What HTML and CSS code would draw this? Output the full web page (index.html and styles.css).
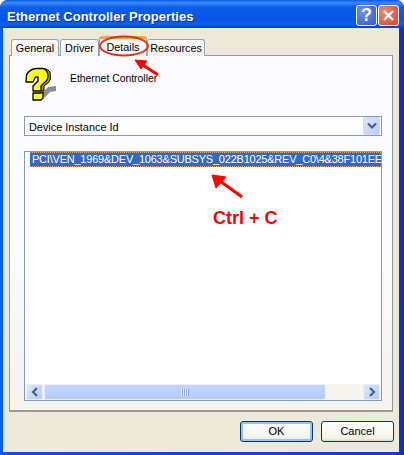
FILE: index.html
```html
<!DOCTYPE html>
<html lang="en">
<head>
    <meta charset="UTF-8">
    <title>Ethernet Controller Properties</title>
    <link rel="stylesheet" href="styles.css">
</head>
<body>
    <div class="window">
        <div class="titlebar">
            <span class="title">Ethernet Controller Properties</span>
            <div class="caption-btn help">?</div>
            <div class="caption-btn close">
                <svg width="13" height="13" viewBox="0 0 13 13"><path d="M2 2 L11 11 M11 2 L2 11" stroke="#fff" stroke-width="2.4" fill="none"/></svg>
            </div>
        </div>

        <div class="client">
            <div class="tabs">
                <div class="tab tab-general">General</div>
                <div class="tab tab-driver">Driver</div>
                <div class="tab tab-details">Details</div>
                <div class="tab tab-resources">Resources</div>
            </div>

            <div class="panel">
                <div class="device">
                    <svg class="device-icon" width="32" height="34" viewBox="0 0 32 34">
                        <path d="M17 27 L23 20 L31 19 L31 24 L25 25 L19 31 Z" fill="#8c8c8c"/>
                        <path d="M18 1.5 Q23 1.5 25 5 L25.5 12 Q24 16 19 19 L19 24 L16 24 L16 19 Z" fill="#a8a510" stroke="#000" stroke-width="1"/>
                        <path d="M1 15 L1.5 8 Q4 2.5 11 1.5 L18 1.5 Q23 3 23 9 Q23 13 19 16 L16 19 L16 24 L8 24 L8 19 L13 14 L13 10 L10.5 10 L8 15 Z" fill="#ffff14" stroke="#000" stroke-width="1.3" stroke-linejoin="round"/>
                        <path d="M8 26 L16 26 L18 25 L18 31 L16 33 L8 33 Z" fill="#ffff14" stroke="#000" stroke-width="1.3" stroke-linejoin="round"/>
                    </svg>
                    <span class="device-name">Ethernet Controller</span>
                </div>

                <div class="combo">
                    <span class="combo-text">Device Instance Id</span>
                    <div class="combo-btn">
                        <svg width="10" height="8" viewBox="0 0 10 8"><path d="M1 1.5 L5 5.5 L9 1.5" stroke="#4d6185" stroke-width="2.2" fill="none"/></svg>
                    </div>
                </div>

                <div class="listbox">
                    <div class="list-body">
                        <div class="list-row">PCI\VEN_1969&amp;DEV_1063&amp;SUBSYS_022B1025&amp;REV_C0\4&amp;38F101EE</div>
                    </div>
                    <div class="scrollbar">
                        <div class="scroll-btn">
                            <svg width="8" height="10" viewBox="0 0 8 10"><path d="M6 1 L2 5 L6 9" stroke="#4d6185" stroke-width="2.2" fill="none"/></svg>
                        </div>
                        <div class="scroll-thumb">
                            <span class="grip"></span>
                        </div>
                        <div class="scroll-track"></div>
                        <div class="scroll-btn">
                            <svg width="8" height="10" viewBox="0 0 8 10"><path d="M2 1 L6 5 L2 9" stroke="#4d6185" stroke-width="2.2" fill="none"/></svg>
                        </div>
                    </div>
                </div>
            </div>

            <div class="buttons">
                <div class="btn btn-default">OK</div>
                <div class="btn">Cancel</div>
            </div>
        </div>

        <!-- anotacoes vermelhas por cima da janela -->
        <svg class="marks" width="404" height="455" viewBox="0 0 404 455">
            <ellipse cx="124" cy="46" rx="24" ry="9.5" fill="none" stroke="#f02a14" stroke-width="1.9"/>
            <g stroke="#ff0000" stroke-width="3" fill="#ff0000">
                <path d="M158 75 L143 65" fill="none"/>
                <path d="M135 60 L147 61 L141 69 Z" stroke-width="1"/>
                <path d="M242 197 L220 181" fill="none"/>
                <path d="M212 175 L226 177 L216 188 Z" stroke-width="1"/>
            </g>
        </svg>
        <span class="note">Ctrl + C</span>
    </div>
</body>
</html>
```

FILE: styles.css
```css
body {
    margin: 0;
    background-color: #ffffff;
    font-family: "Liberation Sans", Arial, sans-serif;
    font-size: 11px;
    color: #000000;
}

.window {
    position: relative;
    width: 404px;
    height: 455px;
    box-sizing: border-box;
    display: flex;
    flex-direction: column;
    padding: 0 5px 3px 3px;
    border-radius: 8px 8px 0 0;
    background-color: #0a3fd8;
    background-image: linear-gradient(to right, #0a5ff0, #0a50e6 2%, #0a3fd8 98%, #0a2fb0);
    overflow: hidden;
}

.titlebar {
    height: 28px;
    margin: 0 -5px 0 -3px;
    padding: 0 5px 0 7px;
    display: flex;
    align-items: center;
    flex-shrink: 0;
    background-image: linear-gradient(to bottom, #0a5ae6 0, #3a8cf8 3px, #0a5ee8 7px, #0654e4 20px, #0a62f0 24px, #0440c8 28px);
}

.title {
    flex: 1;
    color: #ffffff;
    font-weight: bold;
    font-size: 13px;
    text-shadow: 1px 1px 0 #0a2fa0;
    margin-top: 4px;
}

.caption-btn {
    width: 19px;
    height: 19px;
    border: 1px solid #ffffff;
    border-radius: 3px;
    margin-left: 1px;
    margin-top: 3px;
    display: flex;
    align-items: center;
    justify-content: center;
    color: #ffffff;
}

.help {
    background-image: radial-gradient(circle at 30% 30%, #6f8fe8, #2f58d8);
    font-weight: bold;
    font-size: 18px;
}

.close {
    background-image: radial-gradient(circle at 30% 30%, #ec8a70, #d8452a);
}

.client {
    flex: 1;
    display: flex;
    flex-direction: column;
    background-color: #ece9d8;
    padding: 8px 6px 0 6px;
    min-height: 0;
}

.tabs {
    height: 20px;
    display: flex;
    align-items: flex-end;
    padding-left: 2px;
    position: relative;
    z-index: 1;
    margin-bottom: -1px;
}

.tab {
    height: 17px;
    box-sizing: border-box;
    border: 1px solid #91a7b4;
    border-bottom: none;
    border-radius: 3px 3px 0 0;
    background-image: linear-gradient(to bottom, #ffffff, #f1f0ea);
    text-align: center;
    line-height: 16px;
    font-size: 10.8px;
    margin-right: 1px;
}

.tab-general { width: 48px; }
.tab-driver { width: 39px; }
.tab-details {
    width: 48px;
    height: 20px;
    background-image: none;
    background-color: #fcfcfe;
    border-top: 3px solid #f5a83c;
    line-height: 16px;
    margin-left: -1px;
}
.tab-resources { width: 58px; margin-left: -1px; }

.panel {
    width: 384px;
    height: 357px;
    box-sizing: border-box;
    border: 1px solid #919b9c;
    border-bottom: 2px solid #9a9a90;
    background-image: linear-gradient(to bottom, #fcfcfe, #fcfcfe 50%, #f4f3ee);
    padding: 0 10px 9px 14px;
    display: flex;
    flex-direction: column;
}

.device {
    height: 60px;
    display: flex;
    align-items: flex-start;
    flex-shrink: 0;
}

.device-icon {
    margin: 11px 0 0 1px;
}

.device-name {
    margin: 16px 0 0 13px;
    font-size: 10.4px;
    line-height: 13px;
}

.combo {
    height: 20px;
    box-sizing: border-box;
    border: 1px solid #7f9db9;
    background-color: #ffffff;
    display: flex;
    align-items: center;
    padding: 0 1px 0 4px;
    flex-shrink: 0;
    font-size: 10.9px;
}

.combo-text {
    flex: 1;
    margin-top: 1px;
}

.combo-btn {
    width: 15px;
    height: 16px;
    border: 1px solid #c8d8f8;
    border-radius: 2px;
    background-image: linear-gradient(135deg, #dde7fd, #b6ccf9);
    display: flex;
    align-items: center;
    justify-content: center;
}

.listbox {
    flex: 1;
    margin-top: 15px;
    border: 1px solid #7f9db9;
    background-color: #ffffff;
    display: flex;
    flex-direction: column;
    min-height: 0;
}

.list-body {
    flex: 1;
    padding: 0 0 0 5px;
}

.list-row {
    height: 15px;
    line-height: 15px;
    box-sizing: border-box;
    background-color: #316ac5;
    color: #ffffff;
    border-top: 1px dotted #d9b070;
    border-bottom: 1px dotted #d9b070;
    line-height: 13px;
    padding-left: 2px;
    font-size: 11px;
    letter-spacing: -0.22px;
    white-space: nowrap;
}

.scrollbar {
    height: 16px;
    display: flex;
    background-color: #f6f5f0;
}

.scroll-btn {
    width: 15px;
    height: 14px;
    margin: 0 1px;
    border: 1px solid #e8eefc;
    border-radius: 2px;
    background-image: linear-gradient(135deg, #dde7fd, #b6ccf9);
    display: flex;
    align-items: center;
    justify-content: center;
    flex-shrink: 0;
}

.scroll-thumb {
    width: 282px;
    box-sizing: border-box;
    border: 1px solid #e8eefc;
    border-radius: 2px;
    background-image: linear-gradient(to bottom, #c4d5fb, #b6cbf8);
    display: flex;
    align-items: center;
    justify-content: center;
}

.grip {
    width: 8px;
    height: 7px;
    background-image: repeating-linear-gradient(to right, #eef3fe 0, #eef3fe 1px, #8ea8dc 1px, #8ea8dc 2px);
}

.scroll-track {
    flex: 1;
}

.buttons {
    flex: 1;
    display: flex;
    justify-content: flex-end;
    align-items: flex-start;
    gap: 8px;
    padding-top: 9px;
    margin-right: -1px;
}

.btn {
    width: 73px;
    height: 21px;
    box-sizing: border-box;
    border: 1px solid #003c74;
    border-radius: 3px;
    background-image: linear-gradient(to bottom, #ffffff, #f2f1ea 85%, #dcd8c8);
    text-align: center;
    line-height: 19px;
    font-size: 11px;
}

.btn-default {
    box-shadow: inset 0 0 0 2px #a4bde6;
}

.marks {
    position: absolute;
    left: 0;
    top: 0;
    z-index: 2;
    pointer-events: none;
}

.note {
    position: absolute;
    left: 213px;
    top: 208px;
    color: #ff0000;
    font-weight: bold;
    font-size: 18px;
    white-space: nowrap;
}
```
